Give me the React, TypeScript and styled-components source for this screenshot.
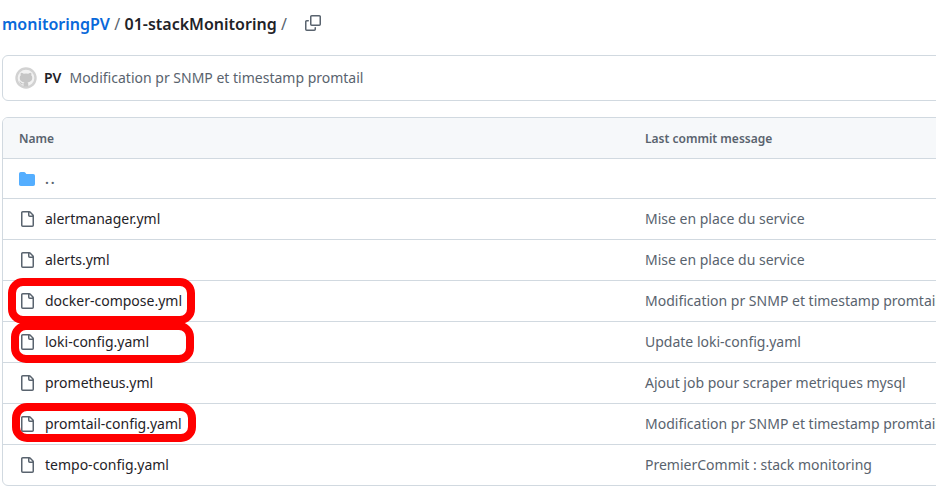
import React from "react";
import styled, { createGlobalStyle } from "styled-components";

const GlobalStyle = createGlobalStyle`
  * { box-sizing: border-box; }
  body {
    margin: 0;
    background: #fff;
    color: #1f2328;
    font: 14px/21px "Noto Sans", sans-serif;
  }
`;

const Page = styled.main`
  position: relative;
  width: 100%;
  height: 488px;
  overflow: hidden;
  padding-left: 2px;
`;

const Breadcrumb = styled.nav`
  display: flex;
  align-items: center;
  height: 55px;
  padding-bottom: 7px;
  font-size: 16px;
  line-height: 24px;
  white-space: pre;
`;

const RepoLink = styled.a`
  color: #0969da;
  font-weight: 600;
`;

const Current = styled.span`
  font-weight: 600;
`;

const Separator = styled.span`
  padding: 0 4.3px;
  color: #59636e;
`;

const CopyButton = styled.span`
  display: flex;
  margin: -2px 0 0 14px;
  color: #59636e;
`;

const Panel = styled.section`
  width: 960px;
  border: 1px solid #d1d9e0;
  border-radius: 6px;
  overflow: hidden;
`;

const CommitBar = styled(Panel)`
  display: flex;
  align-items: center;
  height: 46px;
  padding-left: 12px;
  margin-bottom: 16px;
`;

const Author = styled.strong`
  margin: -1px 8px 0 7px;
  font-weight: 600;
`;

const Message = styled.span`
  margin-top: -1px;
  color: #59636e;
  white-space: nowrap;
`;

const Row = styled.div<{ $h?: number }>`
  display: grid;
  grid-template-columns: 626px 1fr;
  align-items: center;
  height: ${(p) => p.$h ?? 41}px;
  padding-left: 16px;
  border-bottom: 1px solid #d1d9e0;
  &:last-child { height: 40px; border-bottom: 0; }
`;

const HeaderRow = styled(Row)`
  background: #f6f8fa;
  color: #59636e;
  font-size: 12px;
  font-weight: 600;
`;

const NameCell = styled.div`
  display: flex;
  align-items: center;
  gap: 10px;
`;

const FileName = styled.span`
  margin-top: -1px;
`;

const ParentDots = styled.span`
  color: #59636e;
  font-weight: 600;
  letter-spacing: 2px;
`;

const Highlight = styled.div<{ $x: number; $y: number; $w: number; $h: number }>`
  position: absolute;
  left: ${(p) => p.$x}px;
  top: ${(p) => p.$y}px;
  width: ${(p) => p.$w}px;
  height: ${(p) => p.$h}px;
  border: 8px solid #f00;
  border-radius: 15px;
`;

const Icon = styled.svg`
  display: block;
  flex: none;
  fill: currentColor;
`;

const FileGlyph = styled(Icon)`
  color: #59636e;
`;

const FolderGlyph = styled(Icon)`
  color: #54aeff;
`;

const FileIcon = () => (
  <FileGlyph width="16" height="16" viewBox="0 0 16 16">
    <path d="M2 1.75C2 .784 2.784 0 3.75 0h6.586c.464 0 .909.184 1.237.513l2.914 2.914c.329.328.513.773.513 1.237v9.586A1.75 1.75 0 0 1 13.25 16h-9.5A1.75 1.75 0 0 1 2 14.25Zm1.75-.25a.25.25 0 0 0-.25.25v12.5c0 .138.112.25.25.25h9.5a.25.25 0 0 0 .25-.25V6h-2.75A1.75 1.75 0 0 1 9 4.25V1.5Zm6.75.062V4.25c0 .138.112.25.25.25h2.688l-.011-.013-2.914-2.914-.013-.011Z" />
  </FileGlyph>
);

const FolderIcon = () => (
  <FolderGlyph width="16" height="16" viewBox="0 0 16 16">
    <path d="M1.75 1A1.75 1.75 0 0 0 0 2.75v10.5C0 14.216.784 15 1.75 15h12.5A1.75 1.75 0 0 0 16 13.25v-8.5A1.75 1.75 0 0 0 14.25 3H7.5a.25.25 0 0 1-.2-.1l-.9-1.2C6.07 1.26 5.55 1 5 1H1.75Z" />
  </FolderGlyph>
);

const CopyIcon = () => (
  <Icon width="16" height="16" viewBox="0 0 16 16">
    <path d="M0 6.75C0 5.784.784 5 1.75 5h1.5a.75.75 0 0 1 0 1.5h-1.5a.25.25 0 0 0-.25.25v7.5c0 .138.112.25.25.25h7.5a.25.25 0 0 0 .25-.25v-1.5a.75.75 0 0 1 1.5 0v1.5A1.75 1.75 0 0 1 9.25 16h-7.5A1.75 1.75 0 0 1 0 14.25Z" />
    <path d="M5 1.75C5 .784 5.784 0 6.75 0h7.5C15.216 0 16 .784 16 1.75v7.5A1.75 1.75 0 0 1 14.25 11h-7.5A1.75 1.75 0 0 1 5 9.25Zm1.75-.25a.25.25 0 0 0-.25.25v7.5c0 .138.112.25.25.25h7.5a.25.25 0 0 0 .25-.25v-7.5a.25.25 0 0 0-.25-.25Z" />
  </Icon>
);

const Avatar = () => (
  <Icon width="22" height="22" viewBox="0 0 22 22">
    <circle cx="11" cy="11" r="10.7" fill="#d2d2d2" />
    <circle cx="11" cy="11" r="8.3" fill="#f2f2f2" />
    <path
      transform="translate(1 2.4) scale(1.25 1.12)"
      fill="#c6c6c6"
      d="M6.100 15.2v-2c-2 .4-2.5-.7-3-1.600-.3-.5-.6-.5-.7-.7.9-.4 1.5.4 1.9 1 .5.8 1.2.8 1.900.6.1-.5.3-.8.6-1C4.6 11.2 3 10.2 3 7.400c0-.9.3-1.6.8-2.2-.2-.7-.2-1.5.1-2.2.8 0 1.6.4 2.3.9a7.500 7.500 0 0 1 3.6 0c.7-.5 1.5-.9 2.3-.9.3.7.3 1.5.1 2.2.5.6.8 1.3.8 2.2 0 2.8-1.6 3.8-3.8 4.100.4.4.6.9.6 1.6v2.1Z"
    />
  </Icon>
);

const files = [
  ["alertmanager.yml", "Mise en place du service"],
  ["alerts.yml", "Mise en place du service"],
  ["docker-compose.yml", "Modification pr SNMP et timestamp promtail"],
  ["loki-config.yaml", "Update loki-config.yaml"],
  ["prometheus.yml", "Ajout job pour scraper metriques mysql"],
  ["promtail-config.yaml", "Modification pr SNMP et timestamp promtail"],
  ["tempo-config.yaml", "PremierCommit : stack monitoring"],
];

export default function App() {
  return (
    <Page>
      <GlobalStyle />
      <Breadcrumb>
        <RepoLink>monitoringPV</RepoLink>
        <Separator>/</Separator>
        <Current>01-stackMonitoring</Current>
        <Separator>/</Separator>
        <CopyButton><CopyIcon /></CopyButton>
      </Breadcrumb>
      <CommitBar>
        <Avatar />
        <Author>PV</Author>
        <Message>Modification pr SNMP et timestamp promtail</Message>
      </CommitBar>
      <Panel>
        <HeaderRow>
          <span>Name</span>
          <span>Last commit message</span>
        </HeaderRow>
        <Row $h={40}>
          <NameCell><FolderIcon /><ParentDots>..</ParentDots></NameCell>
        </Row>
        {files.map(([name, message]) => (
          <Row key={name}>
            <NameCell><FileIcon /><FileName>{name}</FileName></NameCell>
            <Message>{message}</Message>
          </Row>
        ))}
      </Panel>
      <Highlight $x={8} $y={278} $w={187} $h={46} />
      <Highlight $x={11} $y={322} $w={183} $h={41} />
      <Highlight $x={12} $y={403} $w={184} $h={39} />
    </Page>
  );
}
